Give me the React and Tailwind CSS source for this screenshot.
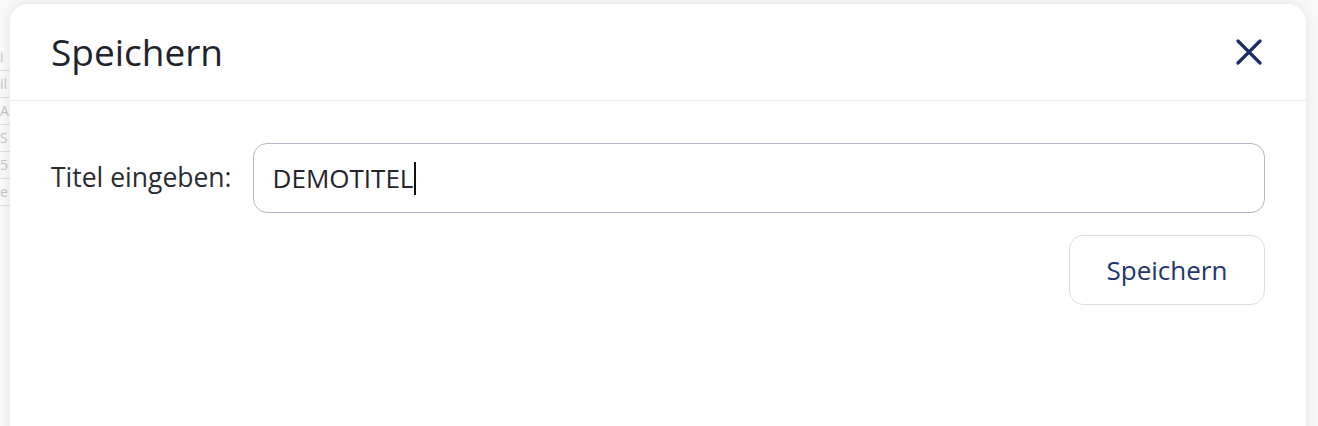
import React from "react";

const font = { fontFamily: '"Open Sans", "Noto Sans", Arial, sans-serif' };

function Background() {
  const rows = ["i", "il", "A", "S", "5", "e"];
  return (
    <div className="flex flex-col pt-[44px] w-[10px] text-[#c4c4c4] text-[14px] leading-none">
      {rows.map((r, i) => (
        <div key={i} className="h-[27px] border-b border-[#dedede] flex items-center">
          {r}
        </div>
      ))}
    </div>
  );
}

export default function App() {
  return (
    <div className="relative w-[1318px] h-[426px] overflow-hidden bg-[#f8f8f8]" style={font}>
      <Background />
      <div className="absolute left-[10px] top-[4px] w-[1296px] h-[460px] bg-white rounded-[18px] shadow-[0_0_12px_rgba(0,0,0,0.09)]">
        <div className="h-[97px] flex items-center justify-between pl-[41px] pr-[44px] border-b border-[#ececf0]">
          <h1 className="text-[37px] leading-none text-[#20232b] -mt-[2px]">Speichern</h1>
          <button className="w-[26px] h-[26px] flex items-center justify-center text-[#1b2d63]">
            <svg width="26" height="26" viewBox="0 0 26 26" fill="none" stroke="currentColor" strokeWidth="3.2" strokeLinecap="round">
              <path d="M2 2 L24 24 M24 2 L2 24" />
            </svg>
          </button>
        </div>
        <div className="px-[41px] pt-[42px] flex flex-col">
          <div className="flex items-center gap-[21px]">
            <label className="text-[26.5px] text-[#2a2c33] whitespace-nowrap">Titel eingeben:</label>
            <div className="flex-1 h-[70px] rounded-[14px] border-[1.5px] border-[#b5b5c6] flex items-center pl-[19px]">
              <span className="text-[26px] text-[#23252c] leading-none">DEMOTITEL</span>
              <span className="w-[2px] h-[33px] bg-[#111] ml-[1px]" />
            </div>
          </div>
          <div className="flex justify-end mt-[22px]">
            <button className="w-[196px] h-[70px] rounded-[14px] border border-[#dcdde3] text-[26px] text-[#22356e] bg-white">
              Speichern
            </button>
          </div>
        </div>
      </div>
    </div>
  );
}
